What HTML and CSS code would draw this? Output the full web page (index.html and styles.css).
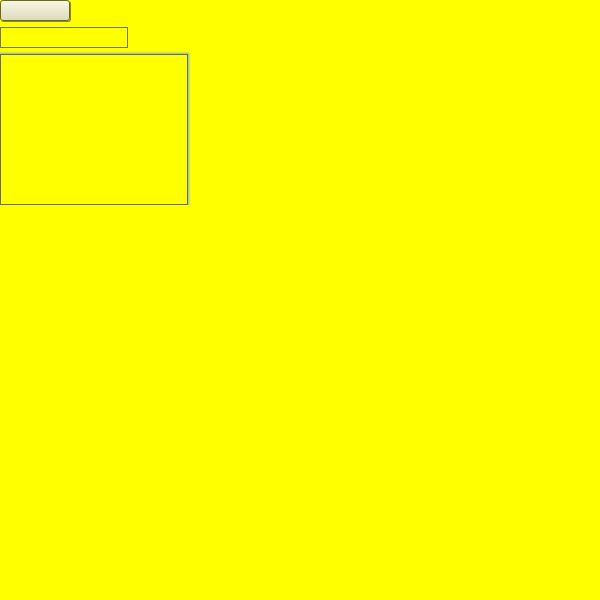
FILE: index.html
```html
<!DOCTYPE html>
<html>
<head>
<meta charset="utf-8">
<link rel="stylesheet" href="styles.css">
</head>
<body>
<div class="stack">
  <button class="btn" type="button"></button>
  <input class="field" type="text">
  <textarea class="area"></textarea>
</div>
</body>
</html>
```

FILE: styles.css
```css
html, body {
  margin: 0;
  padding: 0;
  background: #ffff00;
}
.stack {
  display: flex;
  flex-direction: column;
  align-items: flex-start;
  gap: 6px;
}
.btn {
  box-sizing: border-box;
  width: 70px;
  height: 21px;
  margin: 0;
  padding: 0;
  border: 1px solid #6e6a10;
  border-radius: 3px;
  background: linear-gradient(to bottom, #f8f6e6, #dedbbc);
  box-shadow: 1px 1px 0 #8a8a30;
}
.field {
  box-sizing: border-box;
  width: 128px;
  height: 21px;
  margin: 0;
  padding: 0;
  border: 1px solid #77766a;
  background: #ffff00;
  outline: none;
}
.area {
  box-sizing: border-box;
  width: 188px;
  height: 151px;
  margin: 0;
  padding: 0;
  border: 1px solid #6a6a6a;
  background: #ffff00;
  outline: none;
  resize: none;
  box-shadow: 0 0 2px 1px #80b0cc;
}
```
